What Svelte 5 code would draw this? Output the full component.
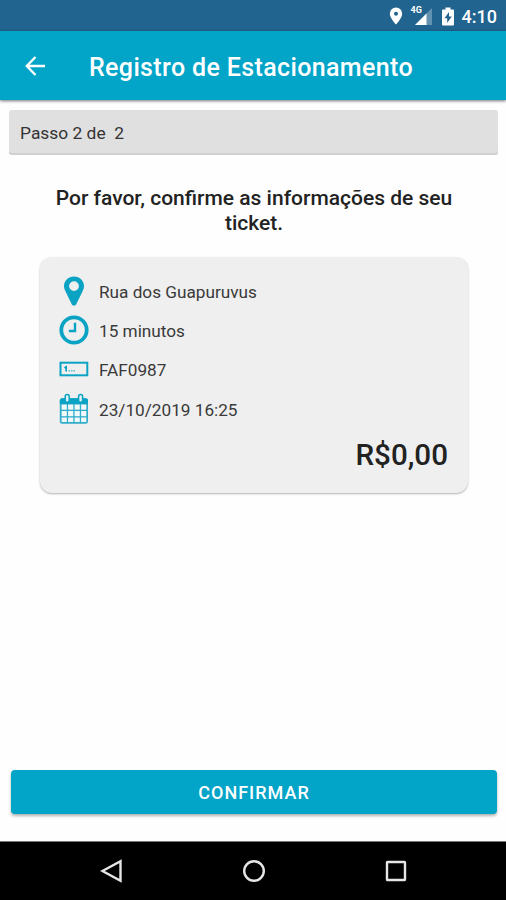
<script lang="ts">
  interface Detail {
    icon: "pin" | "clock" | "plate" | "calendar";
    text: string;
  }

  let step = $state(2);
  const totalSteps = 2;
  const price = "R$0,00";

  const details: Detail[] = [
    { icon: "pin", text: "Rua dos Guapuruvus" },
    { icon: "clock", text: "15 minutos" },
    { icon: "plate", text: "FAF0987" },
    { icon: "calendar", text: "23/10/2019 16:25" },
  ];
</script>

<div class="screen">
  <div class="status-bar">
    <svg class="status-pin" width="14" height="18" viewBox="0 0 14 18">
      <path
        fill="#fff"
        fill-rule="evenodd"
        d="M7 0.5a6.2 6.2 0 0 0-6.2 6.2C.8 11 7 17.5 7 17.5s6.2-6.5 6.2-10.8A6.2 6.2 0 0 0 7 .5zM7 4.7a2 2 0 1 1 0 4a2 2 0 0 1 0-4z"
      />
    </svg>
    <div class="signal">
      <svg width="22" height="19" viewBox="0 0 22 19">
        <path fill="#fff" fill-opacity="0.3" d="M21 1v17H4z" />
        <path fill="#fff" d="M15.500 6.500V18H4z" />
      </svg>
      <span class="network">4G</span>
    </div>
    <svg class="battery" width="12" height="19" viewBox="0 0 12 19">
      <path
        fill="#fff"
        fill-rule="evenodd"
        d="M3.5 0.5h5v2H11a1 1 0 0 1 1 1V17.5a1 1 0 0 1-1 1H1a1 1 0 0 1-1-1V3.5a1 1 0 0 1 1-1h2.5zM7 5L2.5 11.3h2.7V16L9.7 9.6H7z"
      />
    </svg>
    <span class="time">4:10</span>
  </div>

  <header>
    <button class="back" aria-label="Voltar">
      <svg width="20" height="20" viewBox="0 0 20 20" fill="none" stroke="#fff" stroke-width="2.4">
        <path d="M10.5 1L1.8 10l8.7 9M2 10h18" />
      </svg>
    </button>
    <h1>Registro de Estacionamento</h1>
  </header>

  <main>
    <div class="step">Passo {step} de&nbsp; {totalSteps}</div>

    <h2>Por favor, confirme as informações de seu ticket.</h2>

    <section class="ticket">
      <ul>
        {#each details as detail}
          <li>
            <span class="icon">
              {#if detail.icon === "pin"}
                <svg width="20" height="30" viewBox="0 0 20 30">
                  <path
                    fill="#0ba3c4"
                    fill-rule="evenodd"
                    d="M10 .5C4.5.5 0 4.7 0 10c0 2 .6 3.400 1.300 4.900l6.300 13.200c.9 2 3.900 2 4.800 0l6.300-13.200C19.400 13.400 20 12 20 10 20 4.700 15.500.5 10 .5zM10 5.200a4.900 4.900 0 1 1 0 9.800a4.900 4.900 0 0 1 0-9.800z"
                  />
                </svg>
              {:else if detail.icon === "clock"}
                <svg width="30" height="30" viewBox="0 0 30 30" fill="none" stroke="#0ba3c4">
                  <circle cx="15" cy="15" r="12.700" stroke-width="3.800" />
                  <path d="M16 7.800V16H9.800" stroke-width="2.400" />
                </svg>
              {:else if detail.icon === "plate"}
                <svg width="30" height="16" viewBox="0 0 30 16">
                  <rect x="1.500" y="1.700" width="26.800" height="12.600" fill="none" stroke="#0ba3c4" stroke-width="2" />
                  <path fill="#0ba3c4" d="M4.800 6.500L7 4.800h1v5.700H6.300V7.800z" />
                  <path stroke="#0ba3c4" stroke-opacity="0.650" stroke-width="1.500" stroke-dasharray="1.500 1" d="M9.500 9.700h7" />
                </svg>
              {:else}
                <svg width="30" height="32" viewBox="0 0 30 32">
                  <rect x="0.800" y="5.200" width="28.200" height="25.600" rx="2.500" fill="#2fadca" />
                  <path fill="#0ba3c4" d="M3.300 5.200h23.200a2.500 2.500 0 0 1 2.500 2.500v3.300H.8V7.700a2.500 2.500 0 0 1 2.500-2.500z" />
                  <g fill="#f0f8fa">
                    {#each [11.5, 18, 24.5] as y}
                      {#each [2.6, 9.1, 15.600, 22.100] as x}
                        <rect {x} {y} width="5.200" height={y > 20 ? 4.5 : 5.200} />
                      {/each}
                    {/each}
                  </g>
                  <g fill="#e4f3f6" stroke="#0ba3c4" stroke-width="1.500">
                    <rect x="6.200" y="1.400" width="4" height="7.800" rx="2" />
                    <rect x="19.600" y="1.400" width="4" height="7.800" rx="2" />
                  </g>
                </svg>
              {/if}
            </span>
            <span>{detail.text}</span>
          </li>
        {/each}
      </ul>
      <div class="price">{price}</div>
    </section>

    <button class="confirm">CONFIRMAR</button>
  </main>

  <nav>
    <svg width="24" height="26" viewBox="0 0 24 26">
      <path d="M20.500 3.200v19.600L2.500 13z" />
    </svg>
    <svg width="24" height="26" viewBox="0 0 24 26">
      <circle cx="12" cy="13" r="9.800" />
    </svg>
    <svg width="24" height="26" viewBox="0 0 24 26">
      <rect x="3" y="4" width="18" height="18" rx="0.500" />
    </svg>
  </nav>
</div>

<style>
  :global(body) {
    margin: 0;
  }

  .screen {
    display: flex;
    flex-direction: column;
    height: 900px;
    background: #fefefe;
    color: #222;
    font-family: Roboto, sans-serif;
    overflow: hidden;
  }

  button {
    border: 0;
    padding: 0;
    font-family: inherit;
    color: #fff;
  }

  .status-bar {
    display: flex;
    flex: none;
    align-items: center;
    justify-content: flex-end;
    box-sizing: border-box;
    height: 31px;
    padding-right: 9px;
    background: #20648f;
    color: #fff;
  }

  .status-pin {
    margin-top: 1px;
  }

  .signal {
    position: relative;
    height: 19px;
    margin: 2px 0 0 8px;
  }

  .network {
    position: absolute;
    top: -2px;
    left: 0;
    font-size: 9px;
    font-weight: 700;
    line-height: 10px;
  }

  .battery {
    margin: 1px 0 0 9px;
  }

  .time {
    margin: 2px 0 0 8px;
    font-size: 18px;
    font-weight: 500;
  }

  header {
    display: flex;
    flex: none;
    align-items: center;
    height: 69px;
    background: #02a4c8;
    box-shadow: 0 1px 3px rgba(0, 0, 0, 0.55);
  }

  .back {
    display: flex;
    margin: 1px 0 0 25px;
    background: none;
  }

  h1 {
    margin: 4px 0 0 44px;
    color: #fff;
    font-size: 25px;
    font-weight: 500;
    letter-spacing: 0.36px;
    line-height: 30px;
    white-space: nowrap;
  }

  main {
    display: flex;
    flex: 1;
    flex-direction: column;
    padding: 10px 8px 27px 9px;
  }

  .step {
    height: 45px;
    padding-left: 11px;
    border-radius: 3px;
    background: #e0e0e0;
    box-shadow: inset 0 -2px 0 #d0d0d0;
    font-size: 17.4px;
    line-height: 46px;
    color: #333;
  }

  h2 {
    margin: 31px 30px 0 31px;
    font-size: 21px;
    font-weight: 500;
    line-height: 25px;
    text-align: center;
  }

  .ticket {
    box-sizing: border-box;
    height: 236px;
    margin: 21px 30px 0 31px;
    padding: 15px 20px 0 19px;
    border-radius: 12px;
    background: #efefef;
    box-shadow: 0 1px 2px rgba(0, 0, 0, 0.3);
  }

  ul {
    margin: 0;
    padding: 0;
    list-style: none;
  }

  li {
    display: flex;
    align-items: center;
    height: 39.3px;
    font-size: 17.2px;
    color: #3a3a3a;
  }

  .icon {
    display: flex;
    justify-content: center;
    width: 30px;
    margin: -2px 10px 0 0;
  }

  .price {
    margin-top: 8px;
    font-size: 29.6px;
    font-weight: 500;
    line-height: 36px;
    text-align: right;
  }

  .confirm {
    height: 44px;
    margin: auto 1px 0 2px;
    border-radius: 4px;
    background: #02a4c8;
    box-shadow: 0 2px 3px rgba(0, 0, 0, 0.3);
    font-size: 18px;
    font-weight: 500;
    letter-spacing: 1px;
  }

  nav {
    display: flex;
    flex: none;
    justify-content: center;
    align-items: center;
    gap: 118px;
    box-sizing: border-box;
    height: 59px;
    padding-left: 2px;
    border-top: 1px solid #777;
    background: #000;
    fill: none;
    stroke: #e6e6e6;
    stroke-width: 2.4;
  }
</style>
